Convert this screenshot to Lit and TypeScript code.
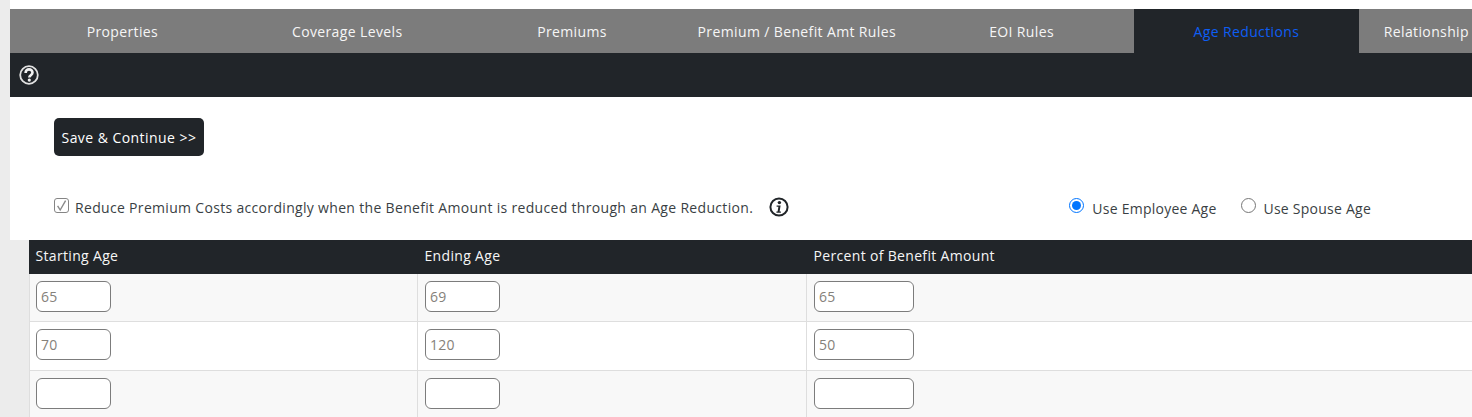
import { LitElement, html, css } from "lit";
import { customElement } from "lit/decorators.js";

const rows = [["65","69","65"],["70","120","50"],["","",""]];

@customElement("app-root")
export class AppRoot extends LitElement {
  static styles = css`
    :host { display:block; width:1472px; height:417px; overflow:hidden; background:#ececec; font-family:"Open Sans","Noto Sans",sans-serif; color:#212529; font-size:14px; }
    .page { margin-left:10px; width:1462px; }
    .top { height:9px; background:#fff; }
    .tabs { display:flex; height:44px; background:#7c7c7c; overflow:hidden; }
    .tab { flex:0 0 224.8px; display:flex; align-items:center; justify-content:center; color:#f6f6f6; font-size:14px; font-weight:500; letter-spacing:.37px; white-space:nowrap; box-sizing:border-box; padding-top:1px; }
    .tab.active { background:#212529; color:#0d5ef4; }
    .tab.last { justify-content:flex-start; padding-left:25px; }
    .bar { height:44px; background:#212529; display:flex; align-items:center; padding-left:9px; }
    .bar svg { display:block; }
    .content { background:#fff; height:143px; padding:21px 0 0 44px; box-sizing:border-box; }
    .btn { display:inline-flex; align-items:center; height:38px; box-sizing:border-box; padding:0 7.5px; background:#212529; color:#fff; border-radius:5px; font-size:14px; font-weight:500; letter-spacing:.45px; }
    .opts { display:flex; align-items:center; margin-top:40px; height:24px; }
    .check { display:flex; align-items:center; gap:6px; color:#3a3f44; font-size:14px; letter-spacing:.32px; margin-bottom:2px; }
    .check svg { margin-bottom:3px; display:block; }
    .radios { display:flex; margin-left:auto; margin-right:101px; gap:24px; align-items:center; margin-top:1px; }
    .radio { display:flex; gap:8px; align-items:center; color:#3a3f44; letter-spacing:.24px; }
    .radio input { margin:0 0 7px; width:15px; height:15px; }
    .info { margin-left:16px; display:block; margin-bottom:2px; }
    .table { margin-left:19px; display:grid; grid-template-columns:388px 389px 1fr; background:#fff; }
    .th { background:#212529; color:#f6f6f6; height:34px; display:flex; align-items:center; padding-left:7.5px; font-weight:500; font-size:14px; letter-spacing:.33px; padding-bottom:3px; box-sizing:border-box; }
    .th.first { padding-left:6.5px; }
    .td { height:48.33px; box-sizing:border-box; padding:7px 0 0 7px; border-left:1px solid #dedede; border-bottom:1px solid #dedede; background:#fff; }
    .td.first { padding-left:6px; }
    .td.odd { background:#f8f8f8; }
    .td input { display:block; box-sizing:border-box; width:75px; height:31px; border:1px solid #7c7c7c; border-radius:6px; background:#fff; padding:0 4px; font:inherit; font-size:14px; letter-spacing:.3px; color:#85817a; margin:0; outline:none; }
    .td.wide input { width:100px; }
  `;
  render() {
    const tabs = ["Properties","Coverage Levels","Premiums","Premium / Benefit Amt Rules","EOI Rules","Age Reductions","Relationship"];
    return html`<div class="page">
      <div class="top"></div>
      <div class="tabs">${tabs.map((t,i)=>html`<div class="tab ${i===5?"active":""} ${i===6?"last":""}">${t}</div>`)}</div>
      <div class="bar">
        <svg width="20" height="20" viewBox="0 0 20 20"><circle cx="10" cy="10" r="8.8" fill="#212529" stroke="#e2e2e2" stroke-width="1.8"/><path d="M6.6 7.9C6.6 5.6 8.1 4.4 10 4.4s3.5 1.2 3.5 3.2c0 2.6-3.2 2.6-3.2 4.8" fill="none" stroke="#f2f2f2" stroke-width="2.6"/><circle cx="10.3" cy="15.1" r="1.6" fill="#f2f2f2"/></svg>
      </div>
      <div class="content">
        <div class="btn">Save &amp; Continue &gt;&gt;</div>
        <div class="opts">
          <div class="check">
            <svg width="15" height="15" viewBox="0 0 15 15"><rect x=".5" y=".5" width="14" height="14" rx="2.5" fill="#fff" stroke="#858585"/><path d="M3.6 7.8 6.2 12 11.6 2.6" fill="none" stroke="#8a8a8a" stroke-width="1.4"/></svg>
            <span>Reduce Premium Costs accordingly when the Benefit Amount is reduced through an Age Reduction.</span>
          </div>
          <svg class="info" width="20" height="20" viewBox="0 0 20 20"><circle cx="10" cy="10" r="8.6" fill="#fff" stroke="#212529" stroke-width="2"/><circle cx="10.4" cy="5.6" r="1.7" fill="#212529"/><path d="M7.6 8.5h4l-1 6h1.3v1.3H7.4v-1.3h1.2l.8-4.7H7.6z" fill="#212529"/></svg>
          <div class="radios">
            <label class="radio"><input type="radio" name="age" checked/>Use Employee Age</label>
            <label class="radio"><input type="radio" name="age"/>Use Spouse Age</label>
          </div>
        </div>
      </div>
      <div class="table">
        ${["Starting Age","Ending Age","Percent of Benefit Amount"].map((t,j)=>html`<div class="th ${j===0?"first":""}">${t}</div>`)}
        ${rows.map((r,i)=>r.map((v,j)=>html`<div class="td ${i%2===0?"odd":""} ${j===2?"wide":""} ${j===0?"first":""}"><input .value=${v}/></div>`))}
      </div>
    </div>`;
  }
}
